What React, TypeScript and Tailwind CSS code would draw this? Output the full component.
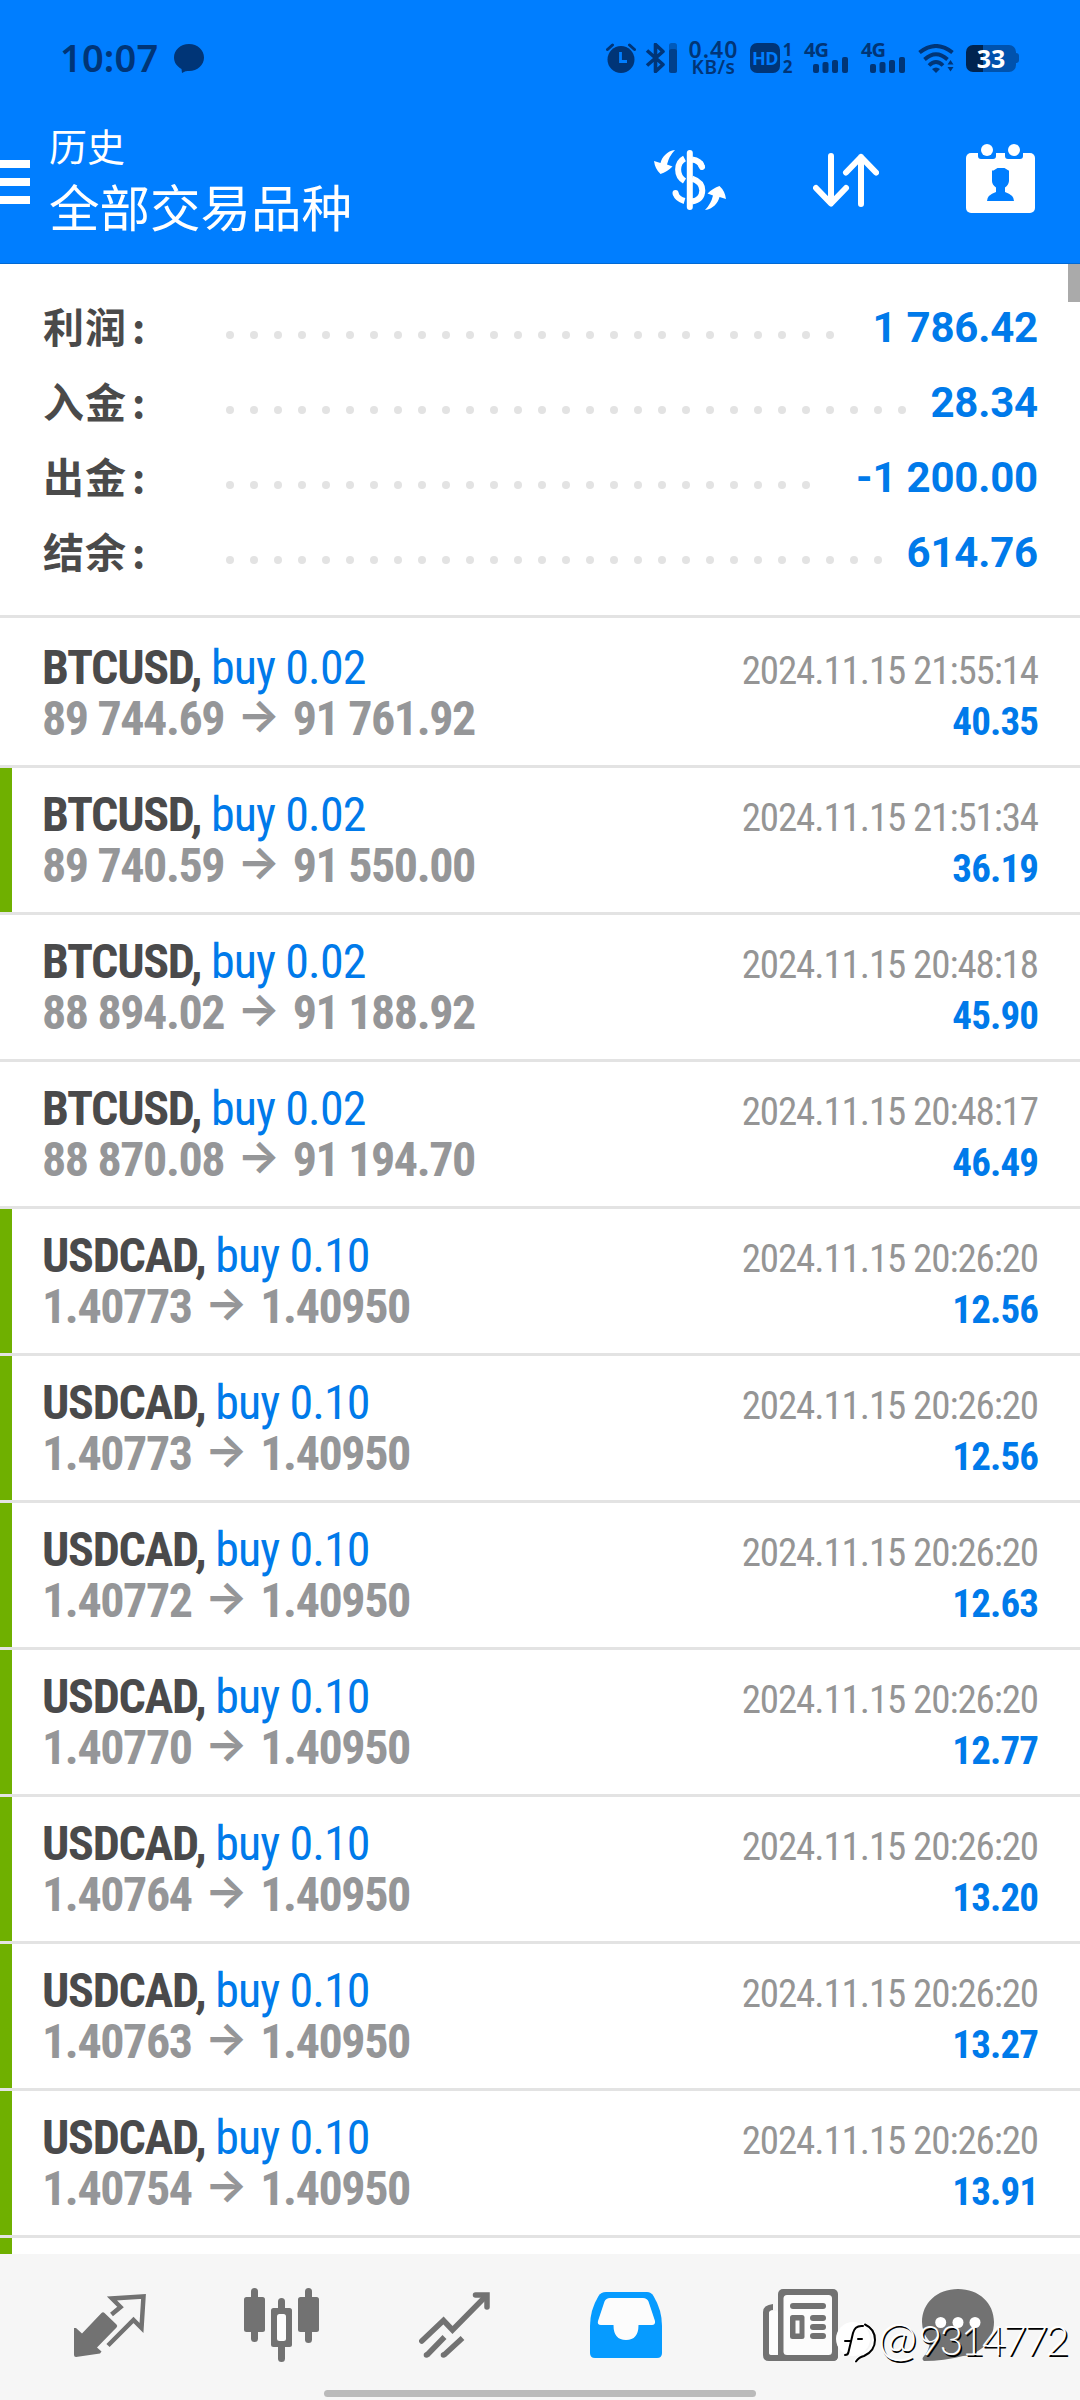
import type { ReactNode } from "react";
import clsx from "clsx";

type Deal = {
  symbol: string;
  volume: string;
  open: string;
  close: string;
  time: string;
  profit: string;
  marked: boolean;
};

const summary = [
  { label: "利润", value: "1 786.42", dots: 26 },
  { label: "入金", value: "28.34", dots: 29 },
  { label: "出金", value: "-1 200.00", dots: 25 },
  { label: "结余", value: "614.76", dots: 28 },
];

const btc = (open: string, close: string, time: string, profit: string, marked = false): Deal => ({
  symbol: "BTCUSD",
  volume: "0.02",
  open,
  close,
  time: `2024.11.15 ${time}`,
  profit,
  marked,
});

const cad = (open: string, profit: string): Deal => ({
  symbol: "USDCAD",
  volume: "0.10",
  open,
  close: "1.40950",
  time: "2024.11.15 20:26:20",
  profit,
  marked: true,
});

const deals: Deal[] = [
  btc("89 744.69", "91 761.92", "21:55:14", "40.35"),
  btc("89 740.59", "91 550.00", "21:51:34", "36.19", true),
  btc("88 894.02", "91 188.92", "20:48:18", "45.90"),
  btc("88 870.08", "91 194.70", "20:48:17", "46.49"),
  cad("1.40773", "12.56"),
  cad("1.40773", "12.56"),
  cad("1.40772", "12.63"),
  cad("1.40770", "12.77"),
  cad("1.40764", "13.20"),
  cad("1.40763", "13.27"),
  cad("1.40754", "13.91"),
];

const Signal = () => (
  <div className="relative h-[30px] w-[44px]">
    <span className="absolute -top-[3px] left-0 text-[20px] leading-5 font-bold tracking-[-1px]">4G</span>
    <svg className="absolute bottom-0 left-[9px]" width="35" height="16" fill="currentColor">
      <rect x="0" y="7" width="6" height="9" rx="2" />
      <rect x="9.5" y="5" width="6" height="11" rx="2" />
      <rect x="19" y="3" width="6" height="13" rx="2" />
      <rect x="29" y="0" width="6" height="16" rx="2" />
    </svg>
  </div>
);

const StatusBar = () => (
  <div className="flex h-[116px] items-center pr-[61px] pl-[60px] font-['Noto_Sans',sans-serif] text-[#003577]">
    <span className="mb-0.5 w-[114px] text-[38px] leading-none font-semibold tracking-[0.200px]">10:07</span>
    <svg width="30" height="29" viewBox="0 0 30 29" fill="currentColor">
      <path d="M15 0C23.500 0 30 6 30 13.500S23.500 27 15 27c-1.500 0-2.500 0-3.500.3L8 29l-.5-4C3 22.500 0 18.500 0 13.500 0 6 6.500 0 15 0Z" />
    </svg>

    <div className="ml-auto flex items-center">
      <svg width="30" height="30" viewBox="0 0 30 30" fill="currentColor">
        <circle cx="15" cy="16.500" r="13.500" />
        <path d="M1.500 6.500 6.500 2M28.500 6.500 23.500 2" stroke="currentColor" strokeWidth="3" strokeLinecap="round" />
        <path d="M14.500 9v9.500H21" fill="none" stroke="#007eff" strokeWidth="2.800" />
      </svg>
      <svg className="ml-[9px]" width="33" height="30" viewBox="0 0 33 30" fill="none" stroke="currentColor">
        <path d="m2 7.500 16 14-7.500 7V1.500l7.500 7-16 14" strokeWidth="3.600" strokeLinejoin="round" />
        <rect x="24" y="0" width="8" height="30" rx="2.500" fill="currentColor" stroke="none" fillOpacity="0.500" />
        <rect x="24" y="6" width="8" height="24" rx="2.500" fill="currentColor" stroke="none" fillOpacity="0.700" />
      </svg>
      <div className="ml-[11px] flex w-[49px] flex-col items-center">
        <span className="text-[23px] leading-[18px] font-semibold tracking-[1px]">0.40</span>
        <span className="text-[19px] leading-[19px] font-semibold tracking-[0.500px]">KB/s</span>
      </div>
      <div className="ml-[12px] flex h-[30px] w-[30px] items-center justify-center rounded-[7px] bg-[#003577] text-[18px] leading-none font-bold tracking-[-0.500px] text-[#007eff]">
        HD
      </div>
      <div className="ml-[2px] flex w-[11px] flex-col items-center text-[17px] leading-[17px] font-bold">
        <span>1</span>
        <span>2</span>
      </div>
      <div className="ml-[11px] flex gap-[13px]">
        <Signal />
        <Signal />
      </div>
      <svg className="ml-[13px]" width="36" height="29" viewBox="0 0 36 29" fill="none" stroke="currentColor">
        <path d="M1.500 8.500Q18-4.500 34.500 8.500" strokeWidth="4" />
        <path d="M6.500 15.500Q18 5 29.500 15.500M11 21.500Q18 14.500 25 21.500" strokeWidth="3.800" />
        <path d="M14 25Q18 22 22 25L18 29Z" fill="currentColor" stroke="none" />
        <path d="m29.500 20.500 3-4.500 3 4.500ZM29.500 23l3 4.500 3-4.500Z" fill="currentColor" stroke="none" />
      </svg>
      <div className="ml-3 flex items-center">
        <div className="flex h-[27px] w-[50px] items-center justify-center rounded-[7px] bg-linear-to-r from-[#002450] from-33% to-[#0052ad] to-33% text-[25px] leading-none font-bold text-white">
          33
        </div>
        <div className="h-2.5 w-[3px] rounded-r-sm bg-[#0052ad]" />
      </div>
    </div>
  </div>
);

const CurrencyIcon = () => (
  <svg width="72" height="60" viewBox="0 0 72 60" fill="none" stroke="#fff" strokeWidth="6">
    <path d="M35.800 3v54" strokeLinecap="round" />
    <path d="M38 9.500Q46 10.500 48 17" />
    <path d="M46.500 13.500 48 17" strokeLinecap="round" />
    <path d="M30.500 8.500C22 13 22 26 30.500 31M38 28.500Q48.300 32 48.300 40.500 48 50 38 51.500" />
    <path d="M21.500 43.500Q23.500 49 30.500 51" />
    <circle cx="21.500" cy="43" r="3" fill="#fff" stroke="none" />
    <g fill="#fff" stroke="none">
      <path d="M21 0C13 1 8 7 6.500 13L0 11Q1 19 6.500 24 13 22 18.500 16.500L13 14.500Q15 6 21 0Z" />
      <path
        d="M21 0C13 1 8 7 6.500 13L0 11Q1 19 6.500 24 13 22 18.500 16.500L13 14.500Q15 6 21 0Z"
        transform="rotate(180 36 30)"
      />
    </g>
  </svg>
);

const SortIcon = () => (
  <svg
    width="66"
    height="54"
    viewBox="0 0 66 54"
    fill="none"
    stroke="#fff"
    strokeWidth="6"
    strokeLinecap="round"
    strokeLinejoin="round"
  >
    <path d="M18 3v47M3 35l15 15.500L33 35M48 51V4M33 19.500 48 4l15 15.500" />
  </svg>
);

const CalendarIcon = () => (
  <svg className="mb-[3px]" width="69" height="69" viewBox="0 0 69 69" fill="#fff">
    <rect y="9" width="69" height="60" rx="5" />
    <path d="M12 8h18v4q0 3-3 3H15q-3 0-3-3ZM39 8h18v4q0 3-3 3H42q-3 0-3-3Z" fill="#007eff" />
    <circle cx="21" cy="6" r="6" />
    <circle cx="48" cy="6" r="6" />
    <path
      d="M26 26.500h1.500l4-2.500h7l4 2.500H43V37q-.5 4-4 6.500V48q9 3 9 9H21q0-6 9-9v-4.500q-4-3-4-6.500Z"
      fill="#007eff"
    />
  </svg>
);

const AppBar = () => (
  <div className="flex h-[148px] items-center border-b border-[#0069d4] pr-[45px] pb-5">
    <div className="flex flex-col gap-2.5 pt-1">
      <div className="h-2 w-[30px] bg-white" />
      <div className="h-2 w-[30px] bg-white" />
      <div className="h-2 w-[30px] bg-white" />
    </div>
    <div className="-mt-2.5 ml-[19px] flex flex-col font-['Noto_Sans_CJK_SC',sans-serif] text-white">
      <span className="text-[38px] leading-[60px]">历史</span>
      <span className="text-[50.500px] leading-[60px]">全部交易品种</span>
    </div>
    <div className="ml-auto flex items-center gap-[87px]">
      <CurrencyIcon />
      <SortIcon />
      <CalendarIcon />
    </div>
  </div>
);

const Summary = () => (
  <div className="flex flex-col border-b-[3px] border-[#e3e3e3] px-[42px] pt-[26px] pb-[25px]">
    {summary.map(({ label, value, dots }) => (
      <div key={label} className="flex h-[75px] items-center">
        <span className="mb-1 w-[176px] pl-px font-['Noto_Sans_CJK_SC',sans-serif] text-[41px] leading-[69px] font-bold text-[#4a4a4a]">
          <span className="tracking-[1px]">{label}</span>
          <span className="ml-[5px]">:</span>
        </span>
        <div className="mt-3.5 flex">
          {Array.from({ length: dots }, (_, i) => (
            <div key={i} className="flex w-6 justify-center">
              <div className="size-2 rounded-full bg-[#e3e3e3]" />
            </div>
          ))}
        </div>
        <span className="ml-auto font-['Roboto',sans-serif] text-[42px] font-bold tracking-[-0.200px] text-[#007aea]">
          {value}
        </span>
      </div>
    ))}
  </div>
);

const DealRow = ({ deal }: { deal: Deal }) => (
  <div
    className={clsx(
      "flex h-[147px] flex-col border-b-[3px] border-b-[#e3e3e3] pt-[21px] pr-[42px] pl-[42px] font-['Roboto_Condensed',sans-serif]",
      deal.marked && "bg-linear-to-r from-[#6fb000] from-[12px] to-white to-[12px]"
    )}
  >
    <div className="flex h-[51px] items-baseline justify-between leading-[51px]">
      <p className="text-[48px] whitespace-pre">
        <span className="font-bold tracking-[-1.300px] text-[#4a4a4b]">{deal.symbol}, </span>
        <span className="tracking-[-0.900px] text-[#007aea]">buy {deal.volume}</span>
      </p>
      <span className="text-[39px] tracking-[-1.100px] text-[#959595]">{deal.time}</span>
    </div>
    <div className="flex h-[51px] items-baseline justify-between leading-[51px] font-bold">
      <p className="flex items-baseline text-[48px] tracking-[-1.400px] text-[#959698]">
        <span>{deal.open}</span>
        <span className="relative bottom-1 mr-[14px] ml-[13px] font-['Inter',sans-serif] text-[45px] leading-none">→</span>
        <span>{deal.close}</span>
      </p>
      <span className="text-[39px] tracking-[-0.900px] text-[#007aea]">{deal.profit}</span>
    </div>
  </div>
);

const TradeIcon = () => (
  <svg width="72" height="63" viewBox="0 0 72 63">
    <path
      d="M0 34h2l6 5.500L27.500 19q1.500-1.500 3 0l12 11.500q1.500 1.500 0 3L23 53.500l4.500 4-1.500 2L2 63q-2 0-2-2Z"
      fill="currentColor"
    />
    <path d="M37.500 20.500 46.500 13 38 4.500 69.500 2.500 67.500 34 59.500 26 34 51.500" fill="none" stroke="currentColor" strokeWidth="4.500" />
  </svg>
);

const CandlesIcon = () => (
  <svg className="-ml-px" width="75" height="74" viewBox="0 0 75 74" fill="currentColor">
    <rect y="9" width="21" height="35" rx="2.500" />
    <rect x="7" width="7" height="54" rx="3.500" />
    <rect x="54" y="9" width="21" height="35" rx="2.500" />
    <rect x="61" width="7" height="55" rx="3.500" />
    <rect x="27" y="20" width="21" height="39" rx="2.500" />
    <rect x="34" y="10" width="7" height="64" rx="3.500" />
    <rect x="33" y="26" width="9" height="27" rx="2.500" fill="#fdfdfd" />
  </svg>
);

const TrendIcon = () => (
  <svg width="71" height="66" viewBox="0 0 71 66" fill="none" stroke="currentColor" strokeWidth="5.500">
    <path d="M2.800 49 24.500 28.500 33.500 38 67 4" strokeLinecap="round" />
    <path d="M56.500 3H68v12" strokeLinecap="round" />
    <path d="m60 3 8 8V3Z" fill="currentColor" stroke="none" />
    <path d="M8 63 25.500 45M25 63 43.500 46" />
    <circle cx="7.500" cy="63" r="2.800" fill="currentColor" stroke="none" />
    <circle cx="24.500" cy="63" r="2.800" fill="currentColor" stroke="none" />
  </svg>
);

const HistoryIcon = () => (
  <svg width="72" height="66" viewBox="0 0 72 66">
    <path
      d="M16 0H57q4 0 6.500 4Q72 18 72 34V61q0 5-5 5H5q-5 0-5-5V34Q0 18 8.500 4 11 0 16 0Z"
      fill="#069bff"
    />
    <path
      d="M20 6H53q4 0 5.500 3.500L65 29q.5 4-3 4H48.500q0 15-12.500 15T23.500 33H11q-4 0-3-4L14.500 9.500Q16 6 20 6Z"
      fill="#fcfcfc"
    />
  </svg>
);

const NewsIcon = () => (
  <svg className="ml-1" width="75" height="72" viewBox="0 0 75 72" fill="currentColor">
    <path d="M6 72q-6 0-6-6V23q0-7 10-8v6q-4 0-4 3.500V63q0 3 3 3h66v1q0 5-5 5Z" />
    <rect x="6" y="22" width="9" height="44" rx="2.500" fill="#fcfcfc" />
    <rect x="15" width="60" height="72" rx="5" />
    <rect x="20.500" y="6" width="48.500" height="60" rx="3.500" fill="#fcfcfc" />
    <rect x="27" y="14" width="36" height="6" rx="3" />
    <rect x="27" y="26" width="14.500" height="24" rx="2.500" />
    <rect x="32.500" y="31.500" width="4" height="13" fill="#fcfcfc" />
    <rect x="47" y="26" width="16" height="6" rx="3" />
    <rect x="47" y="35" width="16" height="6" rx="3" />
    <rect x="47" y="44" width="16" height="6" rx="3" />
  </svg>
);

const ChatIcon = () => (
  <svg width="72" height="72" viewBox="0 0 72 72" fill="currentColor">
    <path d="M36 0C57 0 72 14 72 33S57 66 41 67Q22 72 2 72q-3-2 0-5 5-5 6-14Q0 44 0 33C0 14 15 0 36 0Z" />
    <g fill="#fff">
      <circle cx="18.700" cy="33.500" r="5.500" />
      <circle cx="36" cy="33.500" r="5.500" />
      <circle cx="53" cy="33.500" r="5.500" />
    </g>
  </svg>
);

const Tab = ({ children }: { children: ReactNode }) => (
  <div className="flex h-[142px] w-[172px] items-center justify-center">{children}</div>
);

const TabBar = () => (
  <div className="relative flex h-[146px] bg-[#f6f6f6] pl-6 text-[#727272]">
    <Tab>
      <TradeIcon />
    </Tab>
    <Tab>
      <CandlesIcon />
    </Tab>
    <Tab>
      <TrendIcon />
    </Tab>
    <Tab>
      <HistoryIcon />
    </Tab>
    <Tab>
      <NewsIcon />
    </Tab>
    <div className="flex h-[142px] w-[148px] items-center justify-center">
      <ChatIcon />
    </div>

    <div className="absolute bottom-[3px] left-[324px] h-[7px] w-[432px] rounded-full bg-[#bababa]" />

    {/* author tag */}
    <div className="absolute top-[65px] left-[836px] flex items-start">
      <svg width="42" height="44" viewBox="0 0 42 44" fill="none" strokeLinecap="round">
        <circle cx="17" cy="20" r="17" fill="#fff" />
        <path d="M28 5.500Q38 9 38 20T27 36.500Q23 38 19.500 42.500" stroke="#fff" strokeWidth="4" />
        <path d="M29 5.500Q39 10 39 21T28 37Q23 38 20 42.500" stroke="#000" strokeWidth="2" />
        <path d="M27 7Q19 6 17 14L12.500 33Q12 36 9 36M9 22h6M22 20h4" stroke="#000" strokeWidth="2" />
      </svg>
      <span className="-mt-1 font-['Lato',sans-serif] text-[41px] leading-[44px] font-light tracking-[-2.600px] text-white [text-shadow:1.500px_1.500px_0_#000]">
        <span className="mr-[4px] text-[47px]">@</span>9314772
      </span>
    </div>
  </div>
);

const App = () => (
  <div className="flex h-[2400px] w-[1080px] flex-col overflow-hidden bg-white">
    <div className="bg-[#007eff]">
      <StatusBar />
      <AppBar />
    </div>

    <div className="relative flex flex-1 flex-col overflow-hidden">
      <Summary />
      <div className="flex flex-col pt-[3px]">
        {deals.map((deal, i) => (
          <DealRow key={i} deal={deal} />
        ))}
        <div className="h-4 w-3 bg-[#6fb000]" />
      </div>
      <div className="absolute top-0 right-0 h-[38px] w-3 bg-[#aaaaaa]" />
    </div>

    <TabBar />
  </div>
);

export default App;
